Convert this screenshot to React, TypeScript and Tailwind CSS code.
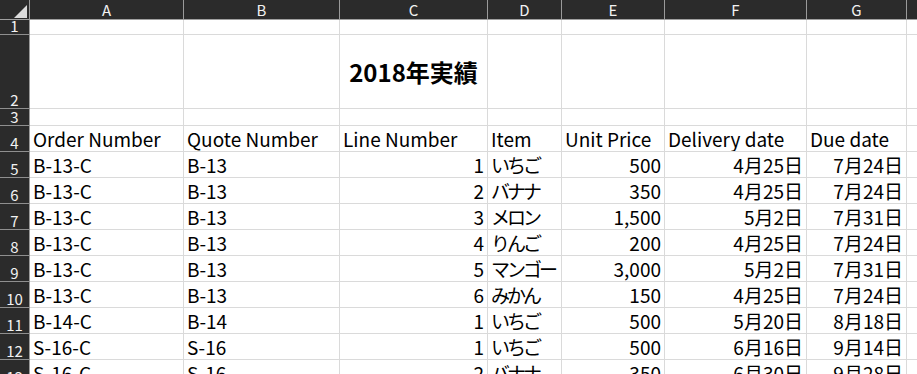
const cols = [
  { name: 'A', w: 'w-[154px]' },
  { name: 'B', w: 'w-[156px]' },
  { name: 'C', w: 'w-[148px]' },
  { name: 'D', w: 'w-[74px]' },
  { name: 'E', w: 'w-[103px]' },
  { name: 'F', w: 'w-[142px]' },
  { name: 'G', w: 'w-[100px]' },
  { name: '', w: 'w-[60px]' },
];

const rows = [
  ['B-13-C', 'B-13', '1', 'いちご', '500', '4月25日', '7月24日'],
  ['B-13-C', 'B-13', '2', 'バナナ', '350', '4月25日', '7月24日'],
  ['B-13-C', 'B-13', '3', 'メロン', '1,500', '5月2日', '7月31日'],
  ['B-13-C', 'B-13', '4', 'りんご', '200', '4月25日', '7月24日'],
  ['B-13-C', 'B-13', '5', 'マンゴー', '3,000', '5月2日', '7月31日'],
  ['B-13-C', 'B-13', '6', 'みかん', '150', '4月25日', '7月24日'],
  ['B-14-C', 'B-14', '1', 'いちご', '500', '5月20日', '8月18日'],
  ['S-16-C', 'S-16', '1', 'いちご', '500', '6月16日', '9月14日'],
  ['S-16-C', 'S-16', '2', 'バナナ', '350', '6月30日', '9月28日'],
];

const headers = ['Order Number', 'Quote Number', 'Line Number', 'Item', 'Unit Price', 'Delivery date', 'Due date', ''];
const rightAligned = [false, false, true, false, true, true, true, false];

function RowHead({ n, h }: { n: string; h: string }) {
  return (
    <div className={`${h} w-[30px] shrink-0 bg-[#2b2b2b] border-b border-[#8f8f8f] border-r border-r-[#9a9a9a] flex items-end justify-center text-[15px] leading-[15px] pb-[1px] text-[#f2f2f2]`}>
      {n}
    </div>
  );
}

function Cell({ w, h, right, children, className = '' }: { w: string; h: string; right?: boolean; children?: React.ReactNode; className?: string }) {
  return (
    <div
      className={`${w} ${h} shrink-0 border-r border-b border-[#dadada] px-[3px] flex items-end whitespace-nowrap overflow-hidden ${
        right ? 'justify-end' : 'justify-start'
      } ${className}`}
    >
      {children}
    </div>
  );
}

export default function App() {
  return (
    <div
      className="w-[917px] h-[374px] overflow-hidden bg-white text-black"
      style={{ fontFamily: '"Noto Sans CJK JP", "Noto Sans", sans-serif' }}
    >
      {/* column letters */}
      <div className="flex h-[20px] bg-[#2b2b2b] border-b border-[#a0a0a0]">
        <div className="w-[30px] shrink-0 relative border-r border-[#9a9a9a]">
          <svg className="absolute left-[14px] top-[5px]" width="13" height="13" viewBox="0 0 13 13">
            <polygon points="13,0 13,13 0,13" fill="#dcdcdc" />
          </svg>
        </div>
        {cols.map((c, i) => (
          <div
            key={i}
            className={`${c.w} shrink-0 border-r border-[#9a9a9a] flex items-center justify-center text-[15px] leading-[19px] text-[#f2f2f2]`}
          >
            {c.name}
          </div>
        ))}
      </div>

      {/* row 1 */}
      <div className="flex">
        <RowHead n="1" h="h-[15px]" />
        {cols.map((c, i) => (
          <Cell key={i} w={c.w} h="h-[15px]" />
        ))}
      </div>

      {/* row 2 - title */}
      <div className="flex">
        <RowHead n="2" h="h-[74px]" />
        {cols.map((c, i) => (
          <Cell key={i} w={c.w} h="h-[74px]" className={i === 2 ? '!items-center !justify-center' : ''}>
            {i === 2 && <span className="text-[24px] leading-[30px] font-bold">2018年実績</span>}
          </Cell>
        ))}
      </div>

      {/* row 3 */}
      <div className="flex">
        <RowHead n="3" h="h-[17px]" />
        {cols.map((c, i) => (
          <Cell key={i} w={c.w} h="h-[17px]" />
        ))}
      </div>

      {/* row 4 - headers */}
      <div className="flex">
        <RowHead n="4" h="h-[26px]" />
        {cols.map((c, i) => (
          <Cell key={i} w={c.w} h="h-[26px]">
            <span className="text-[19px] leading-[25px]">{headers[i]}</span>
          </Cell>
        ))}
      </div>

      {rows.map((r, ri) => (
        <div key={ri} className="flex">
          <RowHead n={String(ri + 5)} h="h-[26px]" />
          {cols.map((c, i) => (
            <Cell key={i} w={c.w} h="h-[26px]" right={rightAligned[i]}>
              <span className={`text-[19px] leading-[25px] ${i === 3 ? 'tracking-[-3px]' : ''}`}>{r[i] ?? ''}</span>
            </Cell>
          ))}
        </div>
      ))}
    </div>
  );
}
